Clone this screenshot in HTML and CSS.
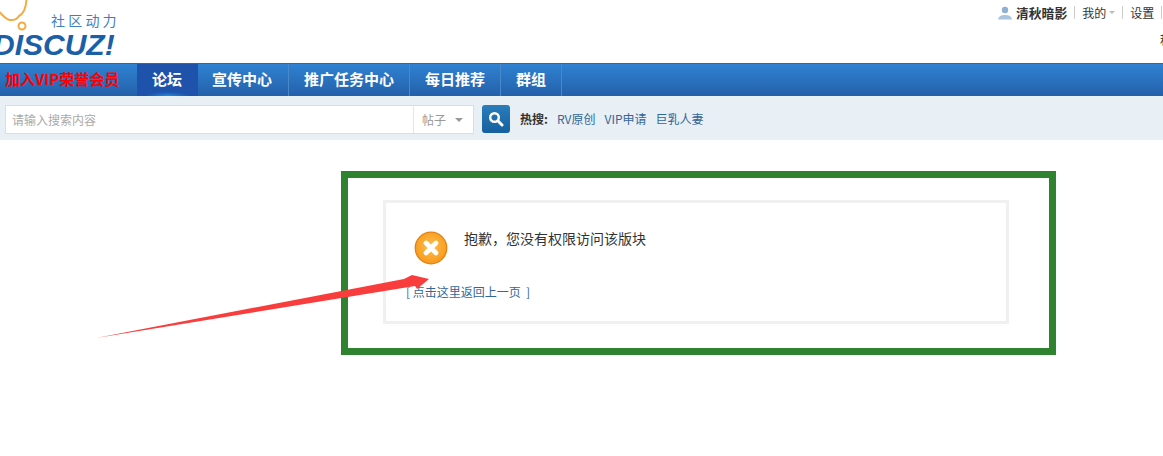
FILE: index.html
```html
<!DOCTYPE html>
<html>
<head>
	<meta charset="utf-8">
	<title>提示信息</title>
	<link rel="stylesheet" href="styles.css">
</head>
<body>
<div class="page">
	<header class="top">
		<div class="logo">
			<svg class="logo-cloud" width="32" height="32" viewBox="0 0 32 32">
				<path d="M-2 11C2 14 5 19 10 20C14 20.500 17 19 19 16C23 14 26 9 26.500 -1" fill="none" stroke="#f5ab42" stroke-width="2"/>
				<circle cx="22" cy="26" r="3.500" fill="none" stroke="#f5ab42" stroke-width="2"/>
			</svg>
			<div class="logo-slogan">社区动力</div>
			<div class="logo-name">DISCUZ!</div>
		</div>
		<div class="user">
			<div class="user-links">
				<svg class="user-icon" width="14" height="14" viewBox="0 0 14 14">
					<circle cx="7" cy="4" r="3.200" fill="#8fb0d2"/>
					<path d="M0 13.500C1 9.500 4 9 7 9C10 9 13 9.500 14 13.500Z" fill="#a9c4e0"/>
				</svg>
				<a class="user-name" href="#">清秋暗影</a>
				<span class="sep"></span>
				<a href="#">我的</a>
				<span class="caret"></span>
				<span class="sep"></span>
				<a href="#">设置</a>
				<span class="sep"></span>
			</div>
			<div class="user-credit">积分</div>
		</div>
	</header>

	<nav class="nav">
		<a class="nav-vip" href="#">加入VIP荣誉会员</a>
		<a class="nav-item active" href="#">论坛</a>
		<a class="nav-item" href="#">宣传中心</a>
		<a class="nav-item" href="#">推广任务中心</a>
		<a class="nav-item" href="#">每日推荐</a>
		<a class="nav-item" href="#">群组</a>
	</nav>

	<div class="search">
		<div class="search-box">
			<div class="search-input">请输入搜索内容</div>
			<div class="search-type">帖子<span class="search-caret"></span></div>
		</div>
		<button class="search-btn">
			<svg width="16" height="16" viewBox="0 0 16 16">
				<circle cx="6.500" cy="6.500" r="4.300" fill="none" stroke="#fff" stroke-width="2.400"/>
				<path d="M9.800 9.800L14 14" stroke="#fff" stroke-width="3" stroke-linecap="round"/>
			</svg>
		</button>
		<div class="hot">
			<strong>热搜:</strong>
			<a href="#">RV原创</a>
			<a href="#">VIP申请</a>
			<a href="#">巨乳人妻</a>
		</div>
	</div>

	<main class="main">
		<div class="mark">
			<div class="notice">
				<div class="notice-row">
					<svg class="notice-icon" width="34" height="34" viewBox="0 0 34 34">
						<defs>
							<radialGradient id="orange" cx="50%" cy="45%" r="55%">
								<stop offset="0" stop-color="#fdc04e"/>
								<stop offset="1" stop-color="#f89a1c"/>
							</radialGradient>
						</defs>
						<circle cx="17" cy="17" r="15.800" fill="url(#orange)" stroke="#e07f10" stroke-width="1.200"/>
						<path d="M12 12L22 22M22 12L12 22" stroke="#fff" stroke-width="4.600" stroke-linecap="round"/>
					</svg>
					<p class="notice-text">抱歉，您没有权限访问该版块</p>
				</div>
				<a class="notice-back" href="#">[ 点击这里返回上一页  ]</a>
			</div>
		</div>
	</main>

	<svg class="arrow" width="1163" height="456" viewBox="0 0 1163 456">
		<polygon points="96,338 404,279 412,275 429,279 417,289 415,286" fill="#f93c3c"/>
	</svg>
</div>
</body>
</html>
```

FILE: styles.css
```css
* { box-sizing: border-box; }

html, body { margin: 0; padding: 0; }

body {
	font-family: "Noto Sans CJK SC", "Liberation Sans", sans-serif;
	font-size: 12px;
	color: #444;
	background: #fff;
}

a { color: #369; text-decoration: none; }

.page {
	position: relative;
	width: 1163px;
	height: 456px;
	overflow: hidden;
}

/* top strip */
.top {
	display: flex;
	height: 63px;
}

.logo {
	position: relative;
	flex: none;
	width: 998px;
	height: 63px;
}

.logo-cloud {
	position: absolute;
	left: 0;
	top: 0;
}

.logo-slogan {
	padding: 11px 0 0 51px;
	font-size: 14px;
	line-height: 19px;
	letter-spacing: 3.200px;
	color: #3f7fbd;
}

.logo-name {
	margin: 2px 0 0 -7px;
	font-family: "Liberation Sans", sans-serif;
	font-size: 30px;
	line-height: 26px;
	font-style: italic;
	font-weight: bold;
	color: #1b5fa8;
}

.user {
	flex: none;
	width: 165px;
	white-space: nowrap;
}

.user-links {
	display: flex;
	align-items: center;
	width: 200px;
	height: 13px;
	margin-top: 6px;
	line-height: 13px;
}

.user-links a { color: #333; }

.user-icon {
	flex: none;
	margin-right: 4px;
}

.user-name {
	font-size: 12.800px;
	font-weight: bold;
}

.sep {
	flex: none;
	width: 1px;
	height: 13px;
	margin: 0 7px;
	background: #ccc;
}

.caret {
	flex: none;
	width: 0;
	height: 0;
	margin-left: 3px;
	border: 3.500px solid transparent;
	border-top-color: #bbb;
	border-bottom: 0;
}

.user-credit {
	margin: 14px 0 0 162px;
	line-height: 14px;
	color: #333;
}

/* main nav */
.nav {
	display: flex;
	height: 33px;
	border-top: 1px solid #1f6bb8;
	background: linear-gradient(#2f82d2, #2460aa);
}

.nav-vip {
	width: 137px;
	padding-left: 5px;
	font-size: 15px;
	font-weight: bold;
	line-height: 30px;
	color: #f00;
	white-space: nowrap;
}

.nav-item {
	padding: 0 15px;
	border-right: 1px solid #4a89c9;
	font-size: 15px;
	font-weight: bold;
	line-height: 30px;
	color: #fff;
}

.nav-item.active {
	width: 61px;
	border-right: 0;
	background: radial-gradient(ellipse 22px 4px at 50% 100%, #1c8ce0, transparent), #1f52aa;
}

.nav-item:nth-child(3) { padding: 0 16px 0 14px; }

/* search */
.search {
	display: flex;
	align-items: flex-start;
	height: 44px;
	padding: 9px 0 0 5px;
	background: #e8eff5;
}

.search-box {
	display: flex;
	width: 469px;
	height: 29px;
	border: 1px solid #d5dfe8;
	background: #fff;
}

.search-input {
	width: 407px;
	padding-left: 6px;
	line-height: 27px;
	color: #aaa;
}

.search-type {
	display: flex;
	align-items: center;
	flex: 1;
	padding-left: 8px;
	border-left: 1px solid #e3e7eb;
	color: #999;
}

.search-caret {
	width: 0;
	height: 0;
	margin-left: 9px;
	border: 4px solid transparent;
	border-top-color: #999;
	border-bottom: 0;
}

.search-btn {
	display: flex;
	align-items: center;
	justify-content: center;
	width: 28px;
	height: 28px;
	margin-left: 8px;
	padding: 0;
	border: 0;
	border-radius: 3px;
	background: linear-gradient(#2a7dbb, #155f9f);
}

.hot {
	display: flex;
	gap: 9px;
	margin-left: 10px;
	line-height: 28px;
}

.hot strong { color: #333; }

/* message */
.main { padding: 31px 0 0 341px; }

.mark {
	width: 715px;
	height: 184px;
	padding: 22px 0 0 35px;
	border: 7px solid #2e8230;
}

.notice {
	width: 626px;
	height: 124px;
	padding: 26px 0 0 28px;
	border: 3px solid #f0f0f0;
}

.notice-row { display: flex; }

.notice-icon {
	flex: none;
	margin-top: 2px;
}

.notice-text {
	margin: 0 0 0 16px;
	font-size: 14px;
	line-height: 19px;
	color: #333;
}

.notice-back {
	display: block;
	margin: 18px 0 0 -8px;
	line-height: 17px;
	white-space: pre;
}

/* annotation drawn over the screenshot */
.arrow {
	position: absolute;
	left: 0;
	top: 0;
	pointer-events: none;
}
```
